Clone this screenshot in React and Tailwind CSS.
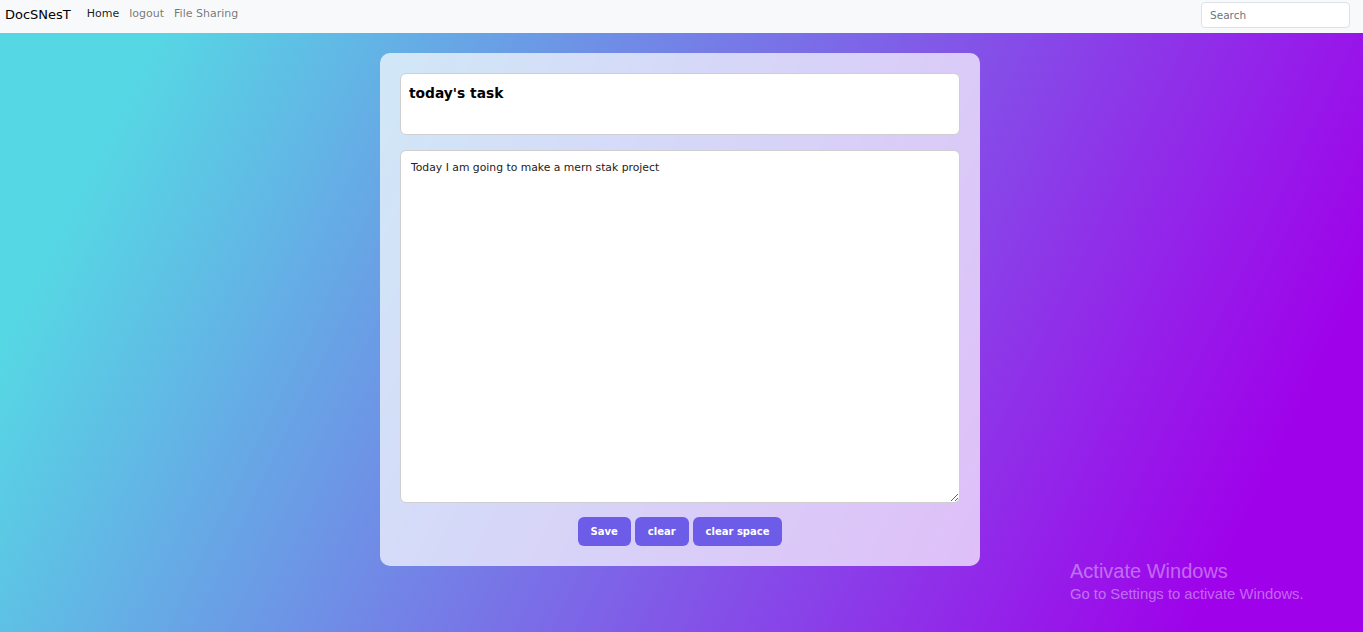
import React, { useState } from 'react';

const font = { fontFamily: '"DejaVu Sans", "Noto Sans", sans-serif' };

const Navbar = () => (
    <nav className="flex h-[33px] items-center justify-between bg-[#f8f9fa] pb-[4px] pl-[5px] pr-[13px]">
        <div className="flex items-center">
            <span className="mr-[16px] text-[13px] text-black">DocSNesT</span>
            <ul className="flex items-center gap-[10px] text-[11px]">
                <li className="text-black/90">Home</li>
                <li className="text-black/55">logout</li>
                <li className="text-black/55">File Sharing</li>
            </ul>
        </div>
        <input
            type="search"
            placeholder="Search"
            className="h-[26px] w-[149px] rounded-[4px] border border-[#dee2e6] bg-white px-[8px] text-[10.5px] outline-none placeholder:text-[#6c757d]"
        />
    </nav>
);

export default function App() {
    const [title, setTitle] = useState("today's task");
    const [note, setNote] = useState('Today I am going to make a mern stak project ');

    return (
        <div style={font} className="relative flex min-h-[632px] flex-col bg-[linear-gradient(116deg,#56d8e4_10%,#9f01ea_90%)]">
            <Navbar />

            {/* NOTE CARD */}
            <div className="flex justify-center pr-[3px] pt-[20px]">
                <div className="flex w-[600px] flex-col rounded-[10px] bg-white/70 p-[20px]">
                    <input
                        value={title}
                        onChange={(e) => setTitle(e.target.value)}
                        className="h-[62px] rounded-[6px] border border-[#cfcfcf] bg-white px-[8px] pb-[22px] text-[13.8px] font-bold text-black outline-none"
                    />
                    <textarea
                        value={note}
                        onChange={(e) => setNote(e.target.value)}
                        className="mt-[15px] h-[353px] resize rounded-[6px] border border-[#cfcfcf] bg-white px-[10px] py-[9px] text-[10.8px] text-[#222] outline-none"
                    />
                    <div className="mt-[14px] flex justify-center gap-[4px]">
                        <button className="h-[29px] rounded-[6px] bg-[#6c5ce7] px-[13px] text-[10px] font-bold text-white">Save</button>
                        <button className="h-[29px] rounded-[6px] bg-[#6c5ce7] px-[13px] text-[10px] font-bold text-white">clear</button>
                        <button className="h-[29px] rounded-[6px] bg-[#6c5ce7] px-[13px] text-[10px] font-bold text-white">clear space</button>
                    </div>
                </div>
            </div>

            {/* WINDOWS WATERMARK */}
            <div className="pointer-events-none absolute left-[1070px] top-[559px] text-white/40" style={{ fontFamily: '"Liberation Sans", sans-serif' }}>
                <div className="text-[20px] leading-[24px]">Activate Windows</div>
                <div className="text-[14.8px] leading-[22px]">Go to Settings to activate Windows.</div>
            </div>
        </div>
    );
}
